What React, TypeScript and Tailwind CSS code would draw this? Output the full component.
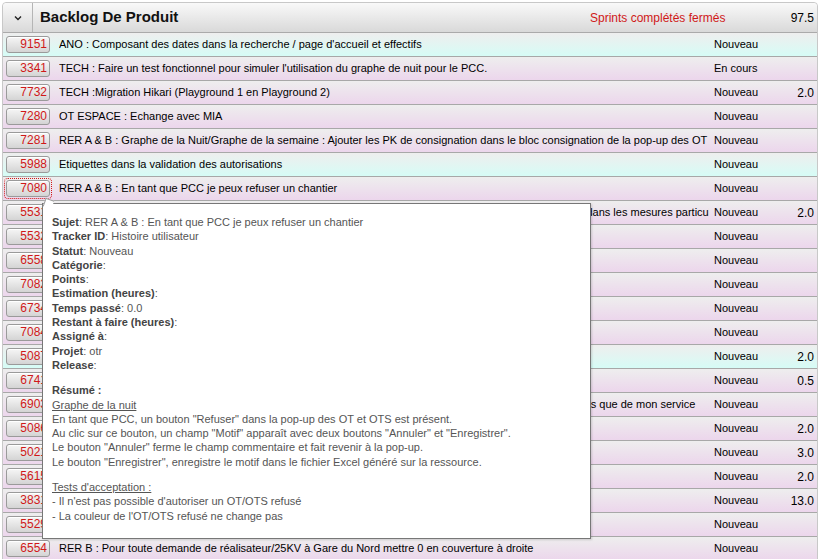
import React from 'react';

type Row = { id: string; text: string; status: string; pts?: string; tone: 'cyan' | 'pink' };

const rows: Row[] = [
  { id: '9151', text: "ANO : Composant des dates dans la recherche / page d'accueil et effectifs", status: 'Nouveau', tone: 'cyan' },
  { id: '3341', text: "TECH : Faire un test fonctionnel pour simuler l'utilisation du graphe de nuit pour le PCC.", status: 'En cours', tone: 'pink' },
  { id: '7732', text: 'TECH :Migration Hikari (Playground 1 en Playground 2)', status: 'Nouveau', pts: '2.0', tone: 'pink' },
  { id: '7280', text: 'OT ESPACE : Echange avec MIA', status: 'Nouveau', tone: 'pink' },
  { id: '7281', text: 'RER A & B : Graphe de la Nuit/Graphe de la semaine : Ajouter les PK de consignation dans le bloc consignation de la pop-up des OT', status: 'Nouveau', tone: 'pink' },
  { id: '5988', text: 'Etiquettes dans la validation des autorisations', status: 'Nouveau', tone: 'cyan' },
  { id: '7080', text: 'RER A & B : En tant que PCC je peux refuser un chantier', status: 'Nouveau', tone: 'pink' },
  { id: '5531', text: 'RER B - PRP : Déplacer le champ DELISSIVUD à la suite de toutes les autres informations de consignation dans les mesures particulières', status: 'Nouveau', pts: '2.0', tone: 'pink' },
  { id: '5532', text: 'RER B - PRP : Afficher les informations de mise hors tension dans les mesures particulières', status: 'Nouveau', tone: 'pink' },
  { id: '6558', text: 'RER B : Affichage des demandes de coupure', status: 'Nouveau', tone: 'pink' },
  { id: '7082', text: 'RER A & B : Export des chantiers', status: 'Nouveau', tone: 'pink' },
  { id: '6734', text: 'OT : Gestion des agents', status: 'Nouveau', tone: 'pink' },
  { id: '7084', text: 'RER A : Validation des OT', status: 'Nouveau', tone: 'pink' },
  { id: '5087', text: 'ANO : Recherche des autorisations', status: 'Nouveau', pts: '2.0', tone: 'cyan' },
  { id: '6741', text: 'TECH : Mise à jour des librairies', status: 'Nouveau', pts: '0.5', tone: 'pink' },
  { id: '6903', text: 'En tant que chef de secteur, je souhaite pouvoir filtrer les demandes afin de ne voir que les OT et les chantiers que de mon service', status: 'Nouveau', tone: 'pink' },
  { id: '5086', text: 'RER B : Consignation', status: 'Nouveau', pts: '2.0', tone: 'pink' },
  { id: '5021', text: 'RER B : Planning', status: 'Nouveau', pts: '3.0', tone: 'pink' },
  { id: '5615', text: 'RER A : Graphe', status: 'Nouveau', pts: '2.0', tone: 'pink' },
  { id: '3831', text: 'OT : Saisie', status: 'Nouveau', pts: '13.0', tone: 'pink' },
  { id: '5529', text: 'RER B : Couverture', status: 'Nouveau', tone: 'pink' },
  { id: '6554', text: 'RER B : Pour toute demande de réalisateur/25KV à Gare du Nord mettre 0 en couverture à droite', status: 'Nouveau', tone: 'pink' },
];

function Tooltip() {
  const L = ({ k, v }: { k: string; v?: string }) => (
    <div>
      <span className="font-bold text-[#444]">{k}</span>: {v}
    </div>
  );
  return (
    <div className="absolute left-[42px] top-[203px] w-[549px] h-[336px] bg-white border border-[#777] shadow-[1px_1px_2px_rgba(0,0,0,0.15)] px-[9px] pt-[11px] text-[11px] leading-[14.3px] text-[#555]">
      <div className="absolute -top-[5px] left-[1px] w-[9px] h-[9px] bg-white border-l border-t border-[#999] rotate-[20deg]" />
      <L k="Sujet" v="RER A & B : En tant que PCC je peux refuser un chantier" />
      <L k="Tracker ID" v="Histoire utilisateur" />
      <L k="Statut" v="Nouveau" />
      <L k="Catégorie" />
      <L k="Points" />
      <L k="Estimation (heures)" />
      <L k="Temps passé" v="0.0" />
      <L k="Restant à faire (heures)" />
      <L k="Assigné à" />
      <L k="Projet" v="otr" />
      <L k="Release" />
      <div className="h-[11px]" />
      <div className="font-bold text-[#444]">Résumé :</div>
      <div className="underline">Graphe de la nuit</div>
      <div>En tant que PCC, un bouton "Refuser" dans la pop-up des OT et OTS est présent.</div>
      <div>Au clic sur ce bouton, un champ "Motif" apparaît avec deux boutons "Annuler" et "Enregistrer".</div>
      <div>Le bouton "Annuler" ferme le champ commentaire et fait revenir à la pop-up.</div>
      <div>Le bouton "Enregistrer", enregistre le motif dans le fichier Excel généré sur la ressource.</div>
      <div className="h-[11px]" />
      <div className="underline">Tests d'acceptation :</div>
      <div>- Il n'est pas possible d'autoriser un OT/OTS refusé</div>
      <div>- La couleur de l'OT/OTS refusé ne change pas</div>
    </div>
  );
}

export default function App() {
  return (
    <div className="relative w-[819px] h-[559px] overflow-hidden bg-white font-['Liberation_Sans',Arial,sans-serif] text-[11px] text-black">
      <div className="ml-[2px] mt-[2px] w-[816px] border border-[#c8c8c8] rounded-t-[4px]">
        <div className="flex h-[30px] items-center bg-gradient-to-b from-[#f9f9f9] to-[#d9d9d9] border-b border-[#aaa] rounded-t-[4px]">
          <div className="w-[30px] h-full flex items-center justify-center border-r border-[#b5b5b5]">
            <svg width="8" height="6" viewBox="0 0 8 6"><path d="M1 1.5 L4 4.5 L7 1.5" fill="none" stroke="#222" strokeWidth="1.4" /></svg>
          </div>
          <div className="pl-[7px] font-bold text-[15px] text-[#111] flex-1">Backlog De Produit</div>
          <div className="text-[#d01818] text-[12px] w-[167px]">Sprints complétés fermés</div>
          <div className="w-[60px] text-right pr-[3px] text-[12px]">97.5</div>
        </div>
        {rows.map((r) => (
          <div
            key={r.id}
            className={`flex h-[24px] items-center border-b border-[#a8a8a8] bg-gradient-to-b ${r.tone === 'cyan' ? 'from-[#eeeeee] to-[#d6fcf6]' : 'from-[#eeeeee] to-[#ecd6ec]'}`}
          >
            <div className="w-[56px] shrink-0 pl-[3px] flex items-center">
              <div className={r.id === '7080' ? 'outline-1 outline-dotted outline-[#d01818] outline-offset-[1px] rounded-[2px]' : ''}>
                <div className="w-[44px] h-[17px] rounded-[3px] border border-[#9a9a9a] bg-gradient-to-b from-[#f6f6f6] to-[#d4d4d4] text-right pr-[2px] text-[#d01818] text-[12px] leading-[15px] shadow-[inset_0_1px_0_#fff]">
                  {r.id}
                </div>
              </div>
            </div>
            <div className="w-[650px] shrink-0 whitespace-nowrap overflow-hidden">{r.text}</div>
            <div className="w-[66px] shrink-0 pl-[5px]">{r.status}</div>
            <div className="flex-1 text-right pr-[3px] text-[12px]">{r.pts}</div>
          </div>
        ))}
      </div>
      <Tooltip />
    </div>
  );
}
